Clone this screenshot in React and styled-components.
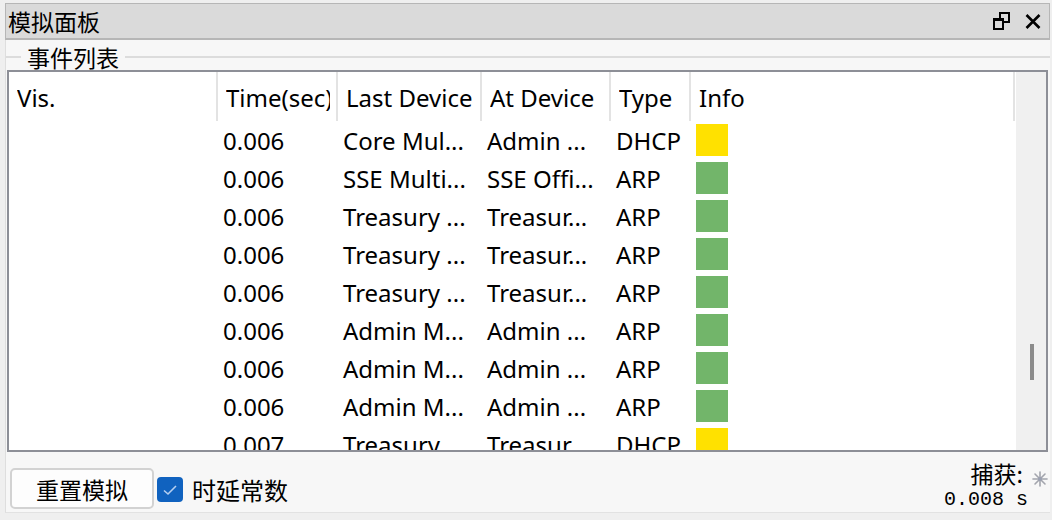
import React from 'react';
import styled, { createGlobalStyle } from 'styled-components';

const GlobalStyle = createGlobalStyle`
  html, body {
    margin: 0;
    padding: 0;
    background: #efefef;
  }
  body {
    font-family: "Noto Sans", "Noto Sans CJK SC", sans-serif;
    color: #000;
  }
`;

const Panel = styled.div`
  width: 1045px;
  height: 510px;
  margin: 3px 0 0 5px;
  background: #f7f7f7;
  border-left: 1px solid #dedede;
  border-bottom: 1px solid #e2e2e2;
  box-sizing: border-box;
  display: flex;
  flex-direction: column;
`;

const TitleBar = styled.div`
  height: 37px;
  box-sizing: border-box;
  margin-left: -1px;
  background: #dadada;
  border: 1px solid #b6b6b6;
  border-bottom-width: 2px;
  display: flex;
  align-items: center;
  padding-left: 2px;
  padding-right: 7px;
`;

const Title = styled.div`
  flex: 1;
  font-family: "Noto Sans CJK SC", sans-serif;
  font-size: 23px;
  line-height: 30px;
`;

const TitleButton = styled.span`
  display: flex;
  align-items: center;
  justify-content: center;
  width: 18px;
  height: 20px;
  margin-left: 14px;
`;

const Group = styled.fieldset`
  margin: 0;
  padding: 0 0 0 1px;
  min-width: 0;
  border: none;
  border-top: 2px solid #dcdcdc;
  margin-top: 5px;
`;

const Legend = styled.legend`
  margin-left: 14px;
  padding: 0 6px;
  font-family: "Noto Sans CJK SC", sans-serif;
  font-size: 23px;
  line-height: 24px;
`;

const Table = styled.div`
  width: 1041px;
  height: 382px;
  margin-top: 1px;
  box-sizing: border-box;
  border: 2px solid #8d8f97;
  background: #fff;
  display: flex;
`;

const List = styled.div`
  width: 1007px;
  display: flex;
  flex-direction: column;
  overflow: hidden;
`;

const columns = '207px 120px 144px 129px 80px 324px 3px';

const HeaderRow = styled.div`
  display: grid;
  grid-template-columns: ${columns};
  height: 49px;
  flex-shrink: 0;
`;

const HeaderCell = styled.div`
  display: flex;
  align-items: center;
  padding: 2px 6px 0 8px;
  border-left: ${p => (p.$first ? 'none' : '2px solid #e3e3e3')};
  font-size: 24px;
  white-space: nowrap;
  overflow: hidden;
`;

const HeaderText = styled.span`
  min-width: 0;
  overflow: hidden;
`;

const Body = styled.div`
  flex: 1;
  overflow: hidden;
`;

const Row = styled.div`
  display: grid;
  grid-template-columns: ${columns};
  height: 38px;
`;

const Cell = styled.div`
  display: flex;
  align-items: center;
  padding: 1px 0 0 7px;
  font-size: 24px;
  white-space: nowrap;
  overflow: hidden;
`;

const Swatch = styled.div`
  width: 32px;
  height: 32px;
  margin-top: -1px;
  background: ${p => p.$color};
`;

const ScrollTrack = styled.div`
  width: 30px;
  background: #f0f0f0;
  display: flex;
  flex-direction: column;
  align-items: center;
`;

const Thumb = styled.div`
  width: 4px;
  height: 36px;
  margin-top: 272px;
  margin-left: 2px;
  background: #8b8b8b;
`;

const Footer = styled.div`
  flex: 1;
  display: flex;
  align-items: flex-start;
  padding-left: 4px;
`;

const Button = styled.button`
  width: 144px;
  height: 41px;
  margin-top: 16px;
  box-sizing: border-box;
  border: 2px solid #d2d2d2;
  border-radius: 5px;
  background: #fdfdfd;
  font-family: "Noto Sans CJK SC", sans-serif;
  font-size: 23px;
  color: #000;
  padding: 0;
`;

const CheckLabel = styled.label`
  display: flex;
  align-items: center;
  margin-top: 25px;
  margin-left: 3px;
  font-family: "Noto Sans CJK SC", sans-serif;
  font-size: 24px;
  line-height: 25px;
`;

const Box = styled.span`
  width: 26px;
  height: 25px;
  border-radius: 4px;
  background: #1062bf;
  display: flex;
  align-items: center;
  justify-content: center;
  margin-right: 9px;
`;

const Status = styled.div`
  margin-left: auto;
  display: flex;
  flex-direction: column;
  align-items: flex-end;
  padding-top: 8px;
  padding-right: 2px;
`;

const StatusTop = styled.div`
  display: flex;
  align-items: flex-end;
  font-family: "Noto Sans CJK SC", sans-serif;
  font-size: 23px;
  line-height: 26px;
`;

const Spinner = styled.span`
  display: flex;
  margin-left: 9px;
  margin-bottom: -1px;
`;

const Elapsed = styled.div`
  font-family: "Liberation Mono", monospace;
  font-size: 20px;
  line-height: 20px;
  margin-top: 4px;
  padding-right: 20px;
  white-space: pre;
`;

const rows = [
  ['0.006', 'Core Mul...', 'Admin ...', 'DHCP', '#ffe100'],
  ['0.006', 'SSE Multi...', 'SSE Offi...', 'ARP', '#72b56a'],
  ['0.006', 'Treasury ...', 'Treasur...', 'ARP', '#72b56a'],
  ['0.006', 'Treasury ...', 'Treasur...', 'ARP', '#72b56a'],
  ['0.006', 'Treasury ...', 'Treasur...', 'ARP', '#72b56a'],
  ['0.006', 'Admin M...', 'Admin ...', 'ARP', '#72b56a'],
  ['0.006', 'Admin M...', 'Admin ...', 'ARP', '#72b56a'],
  ['0.006', 'Admin M...', 'Admin ...', 'ARP', '#72b56a'],
  ['0.007', 'Treasury ...', 'Treasur...', 'DHCP', '#ffe100'],
];

const headers = ['Vis.', 'Time(sec)', 'Last Device', 'At Device', 'Type', 'Info', ''];

export default function App() {
  return (
    <>
      <GlobalStyle />
      <Panel>
        <TitleBar>
          <Title>模拟面板</Title>
          <TitleButton>
            <svg width="17" height="18" viewBox="0 0 17 18">
              <rect x="7" y="1" width="9" height="9" fill="none" stroke="#000" strokeWidth="2" />
              <rect x="1" y="7" width="9" height="10" fill="#dadada" stroke="#000" strokeWidth="2" />
              <rect x="1" y="6" width="10" height="3" fill="#000" />
            </svg>
          </TitleButton>
          <TitleButton>
            <svg width="16" height="15" viewBox="0 0 16 15">
              <path d="M1.5 1 L14.5 14 M14.5 1 L1.5 14" stroke="#000" strokeWidth="2.6" />
            </svg>
          </TitleButton>
        </TitleBar>
        <Group>
          <Legend>事件列表</Legend>
          <Table>
            <List>
              <HeaderRow>
                {headers.map((h, i) => (
                  <HeaderCell key={i} $first={i === 0}>
                    <HeaderText>{h}</HeaderText>
                  </HeaderCell>
                ))}
              </HeaderRow>
              <Body>
                {rows.map((r, i) => (
                  <Row key={i}>
                    <Cell />
                    <Cell>{r[0]}</Cell>
                    <Cell>{r[1]}</Cell>
                    <Cell>{r[2]}</Cell>
                    <Cell>{r[3]}</Cell>
                    <Cell><Swatch $color={r[4]} /></Cell>
                    <Cell />
                  </Row>
                ))}
              </Body>
            </List>
            <ScrollTrack>
              <Thumb />
            </ScrollTrack>
          </Table>
        </Group>
        <Footer>
          <Button>重置模拟</Button>
          <CheckLabel>
            <Box>
              <svg width="16" height="12" viewBox="0 0 16 12">
                <path d="M2 6.5 L6 10 L14 2" fill="none" stroke="#b6cff0" strokeWidth="1.6" />
              </svg>
            </Box>
            时延常数
          </CheckLabel>
          <Status>
            <StatusTop>
              捕获:
              <Spinner>
                <svg width="16" height="16" viewBox="0 0 16 16">
                  <g stroke="#a3a5ad" strokeWidth="1.6" strokeLinecap="round">
                    <path d="M8 1 V15" />
                    <path d="M1 8 H15" />
                    <path d="M3 3 L13 13" />
                    <path d="M13 3 L3 13" />
                  </g>
                  <circle cx="8" cy="8" r="2" fill="#9aa0b0" />
                </svg>
              </Spinner>
            </StatusTop>
            <Elapsed>0.008 s</Elapsed>
          </Status>
        </Footer>
      </Panel>
    </>
  );
}
